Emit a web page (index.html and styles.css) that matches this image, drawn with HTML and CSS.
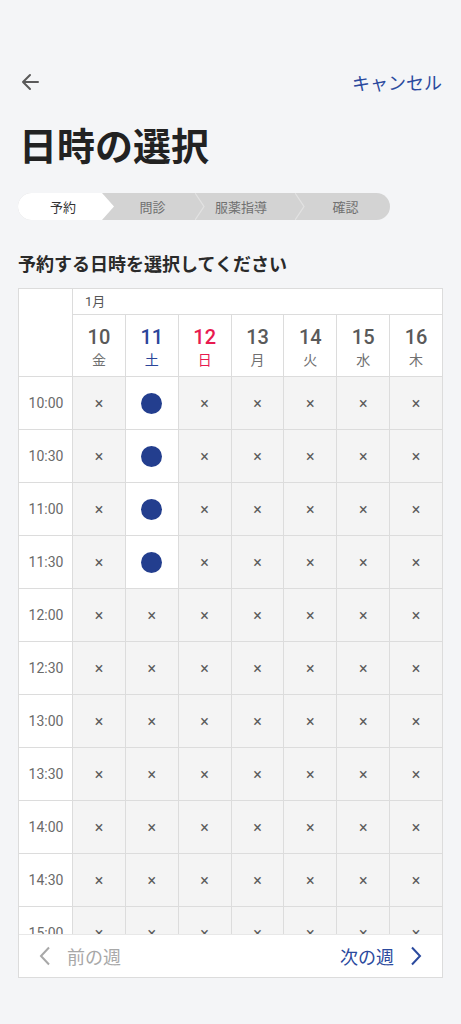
FILE: index.html
```html
<!DOCTYPE html>
<html lang="ja">
<head>
<meta charset="utf-8">
<title>日時の選択</title>
<link rel="stylesheet" href="styles.css">
</head>
<body>
<div class="page">
  <div class="topbar">
    <svg class="back" width="20" height="20" viewBox="0 0 20 20"><path d="M18 10H3M10 3L3 10L10 17" fill="none" stroke="#5a5a5a" stroke-width="2" stroke-linecap="round" stroke-linejoin="round"/></svg>
    <span class="cancel">キャンセル</span>
  </div>
  <h1 class="title">日時の選択</h1>
  <div class="stepper">
    <div class="step step-active s1">予約</div>
    <div class="step s2">問診</div>
    <svg class="sep" width="10" height="27" viewBox="0 0 10 27"><path d="M0 0L9 13.5L0 27" fill="none" stroke="#e2e2e2" stroke-width="1.2"/></svg>
    <div class="step s3">服薬指導</div>
    <svg class="sep" width="10" height="27" viewBox="0 0 10 27"><path d="M0 0L9 13.5L0 27" fill="none" stroke="#e2e2e2" stroke-width="1.2"/></svg>
    <div class="step s4">確認</div>
  </div>
  <h2 class="subtitle">予約する日時を選択してください</h2>
  <div class="calendar">
    <div class="viewport">
      <div class="grid">
        <div class="corner"></div>
        <div class="month">1月</div>
        <div class="day"><span class="num">10</span><span class="wd">金</span></div>
        <div class="day sat"><span class="num">11</span><span class="wd">土</span></div>
        <div class="day sun"><span class="num">12</span><span class="wd">日</span></div>
        <div class="day"><span class="num">13</span><span class="wd">月</span></div>
        <div class="day"><span class="num">14</span><span class="wd">火</span></div>
        <div class="day"><span class="num">15</span><span class="wd">水</span></div>
        <div class="day"><span class="num">16</span><span class="wd">木</span></div>

        <div class="time">10:00</div><div class="cell">×</div><div class="cell open"><span class="dot"></span></div><div class="cell">×</div><div class="cell">×</div><div class="cell">×</div><div class="cell">×</div><div class="cell">×</div>
        <div class="time">10:30</div><div class="cell">×</div><div class="cell open"><span class="dot"></span></div><div class="cell">×</div><div class="cell">×</div><div class="cell">×</div><div class="cell">×</div><div class="cell">×</div>
        <div class="time">11:00</div><div class="cell">×</div><div class="cell open"><span class="dot"></span></div><div class="cell">×</div><div class="cell">×</div><div class="cell">×</div><div class="cell">×</div><div class="cell">×</div>
        <div class="time">11:30</div><div class="cell">×</div><div class="cell open"><span class="dot"></span></div><div class="cell">×</div><div class="cell">×</div><div class="cell">×</div><div class="cell">×</div><div class="cell">×</div>
        <div class="time">12:00</div><div class="cell">×</div><div class="cell">×</div><div class="cell">×</div><div class="cell">×</div><div class="cell">×</div><div class="cell">×</div><div class="cell">×</div>
        <div class="time">12:30</div><div class="cell">×</div><div class="cell">×</div><div class="cell">×</div><div class="cell">×</div><div class="cell">×</div><div class="cell">×</div><div class="cell">×</div>
        <div class="time">13:00</div><div class="cell">×</div><div class="cell">×</div><div class="cell">×</div><div class="cell">×</div><div class="cell">×</div><div class="cell">×</div><div class="cell">×</div>
        <div class="time">13:30</div><div class="cell">×</div><div class="cell">×</div><div class="cell">×</div><div class="cell">×</div><div class="cell">×</div><div class="cell">×</div><div class="cell">×</div>
        <div class="time">14:00</div><div class="cell">×</div><div class="cell">×</div><div class="cell">×</div><div class="cell">×</div><div class="cell">×</div><div class="cell">×</div><div class="cell">×</div>
        <div class="time">14:30</div><div class="cell">×</div><div class="cell">×</div><div class="cell">×</div><div class="cell">×</div><div class="cell">×</div><div class="cell">×</div><div class="cell">×</div>
        <div class="time">15:00</div><div class="cell">×</div><div class="cell">×</div><div class="cell">×</div><div class="cell">×</div><div class="cell">×</div><div class="cell">×</div><div class="cell">×</div>
        <div class="time">15:30</div><div class="cell">×</div><div class="cell">×</div><div class="cell">×</div><div class="cell">×</div><div class="cell">×</div><div class="cell">×</div><div class="cell">×</div>
      </div>
    </div>
    <div class="footer">
      <div class="nav prev">
        <svg width="12" height="20" viewBox="0 0 12 20"><path d="M10 1.5L2 10L10 18.5" fill="none" stroke="#a8a8a8" stroke-width="2"/></svg>
        <span>前の週</span>
      </div>
      <div class="nav next">
        <span>次の週</span>
        <svg width="12" height="20" viewBox="0 0 12 20"><path d="M2 1.5L10 10L2 18.5" fill="none" stroke="#2b4a9e" stroke-width="2"/></svg>
      </div>
    </div>
  </div>
</div>
</body>
</html>
```

FILE: styles.css
```css
* { box-sizing: border-box; }
html, body {
  margin: 0;
  padding: 0;
  background: #f4f5f7;
}
body {
  font-family: Roboto, "Noto Sans CJK JP", "Noto Sans", sans-serif;
  color: #222;
  width: 461px;
  height: 1024px;
  overflow: hidden;
}
.page {
  padding: 62px 18px 0 18px;
}
.topbar {
  height: 40px;
  display: flex;
  align-items: center;
  justify-content: space-between;
  padding-left: 2px;
}
.back { display: block; }
.cancel {
  font-family: "Noto Sans CJK JP", sans-serif;
  font-size: 18px;
  color: #2b4a9e;
  padding-right: 1px;
}
.title {
  margin: 16px 0 0 0;
  padding-left: 1px;
  font-family: "Noto Sans CJK JP", sans-serif;
  font-size: 38px;
  line-height: 52px;
  font-weight: 700;
  color: #222;
}
.stepper {
  margin-top: 23px;
  width: 372px;
  height: 27px;
  border-radius: 13.5px;
  overflow: hidden;
  background: #d3d3d3;
  display: flex;
  font-family: "Noto Sans CJK JP", sans-serif;
  font-size: 13px;
  color: #707070;
}
.step {
  height: 27px;
  line-height: 27px;
  text-align: center;
  flex: none;
}
.sep { flex: none; display: block; }
.step-active {
  background: #fff;
  color: #333;
  clip-path: polygon(0 0, 84px 0, 96px 50%, 84px 100%, 0 100%);
}
.s1 { width: 96px; padding-right: 6px; }
.s2 { width: 81px; padding-right: 4px; }
.s3 { width: 90px; padding-right: 18px; }
.s4 { width: 85px; padding-right: 4px; }
.subtitle {
  margin: 30px 0 0 0;
  font-family: "Noto Sans CJK JP", sans-serif;
  font-size: 18px;
  line-height: 26px;
  font-weight: 700;
  color: #2a2a2a;
}
.calendar {
  margin-top: 12px;
  width: 425px;
  border: 1px solid #dcdcdc;
  background: #fff;
}
.viewport {
  height: 645px;
  overflow: hidden;
}
.grid {
  display: grid;
  grid-template-columns: 53px repeat(7, 1fr);
  grid-auto-rows: 52px;
  grid-template-rows: 25px 61px;
  gap: 1px;
  background: #dcdcdc;
}
.corner {
  grid-row: span 2;
  background: #fff;
}
.month {
  grid-column: span 7;
  background: #fff;
  font-family: Roboto, "Noto Sans CJK JP", sans-serif;
  font-size: 13px;
  color: #555;
  padding-left: 12px;
  line-height: 25px;
}
.day {
  background: #fff;
  display: flex;
  flex-direction: column;
  align-items: center;
  justify-content: center;
  color: #5a5a5a;
  padding-top: 2px;
}
.num {
  font-size: 20px;
  line-height: 24px;
  font-weight: 500;
}
.wd {
  font-family: "Noto Sans CJK JP", sans-serif;
  font-size: 14px;
  line-height: 20px;
  color: #707070;
}
.sat .num, .sat .wd { color: #2b4599; }
.sun .num, .sun .wd { color: #e81a50; }
.time {
  background: #fff;
  display: flex;
  align-items: center;
  justify-content: center;
  font-size: 14px;
  color: #6a6a6a;
  padding-left: 1px;
}
.cell {
  background: #f4f4f4;
  display: flex;
  align-items: center;
  justify-content: center;
  font-size: 16px;
  color: #5c5c5c;
}
.cell.open { background: #fff; }
.dot {
  width: 21px;
  height: 21px;
  border-radius: 50%;
  background: #233e8e;
}
.footer {
  border-top: 1px solid #e8e8e8;
  height: 43px;
  display: flex;
  align-items: center;
  justify-content: space-between;
  padding: 0 20px 0 20px;
  font-family: "Noto Sans CJK JP", sans-serif;
  font-size: 18px;
}
.nav {
  display: flex;
  align-items: center;
}
.nav svg { display: block; }
.prev { color: #a8a8a8; gap: 16px; }
.next { color: #2b4a9e; gap: 16px; }
```
